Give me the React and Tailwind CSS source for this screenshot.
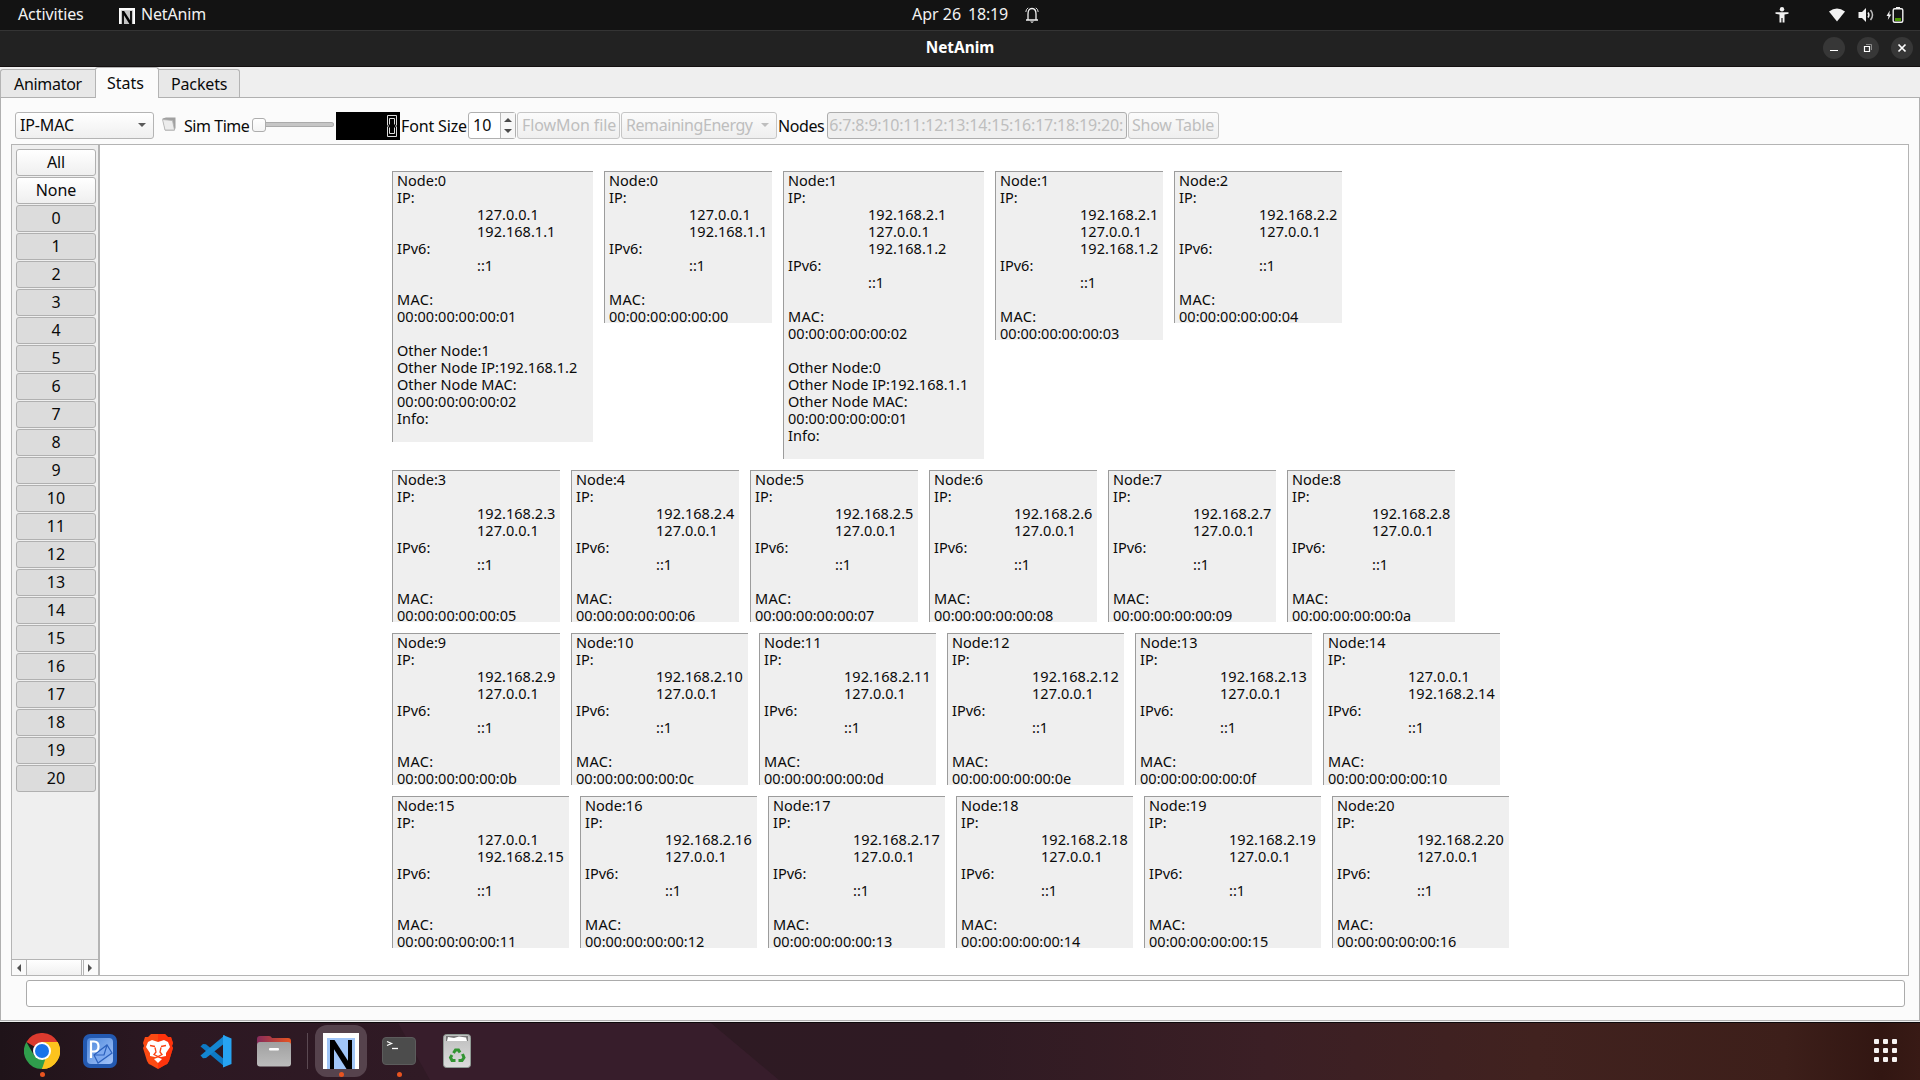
import React from "react";

const v6 = (ips, mac) => ["IP:", ...ips.map((i) => "\t" + i), "IPv6:", "\t::1", "", "MAC:", mac];
const addr = (n) => "00:00:00:00:00:" + n;

const basic = (node, ips, mac) => ({ wide: false, lines: ["Node:" + node, ...v6(ips, addr(mac))] });
const linked = (node, ips, mac, other, otherIp, otherMac) => ({
  wide: true,
  lines: [
    "Node:" + node,
    ...v6(ips, addr(mac)),
    "",
    "Other Node:" + other,
    "Other Node IP:" + otherIp,
    "Other Node MAC:",
    addr(otherMac),
    "Info:",
    "",
  ],
});

const LO = "127.0.0.1";
const net = (n) => "192.168.2." + n;

const ROWS = [
  [
    linked(0, [LO, "192.168.1.1"], "01", 1, "192.168.1.2", "02"),
    basic(0, [LO, "192.168.1.1"], "00"),
    linked(1, [net(1), LO, "192.168.1.2"], "02", 0, "192.168.1.1", "01"),
    basic(1, [net(1), LO, "192.168.1.2"], "03"),
    basic(2, [net(2), LO], "04"),
  ],
  [3, 4, 5, 6, 7, 8].map((n) => basic(n, [net(n), LO], ["05", "06", "07", "08", "09", "0a"][n - 3])),
  [
    basic(9, [net(9), LO], "0b"),
    basic(10, [net(10), LO], "0c"),
    basic(11, [net(11), LO], "0d"),
    basic(12, [net(12), LO], "0e"),
    basic(13, [net(13), LO], "0f"),
    basic(14, [LO, net(14)], "10"),
  ],
  [
    basic(15, [LO, net(15)], "11"),
    basic(16, [net(16), LO], "12"),
    basic(17, [net(17), LO], "13"),
    basic(18, [net(18), LO], "14"),
    basic(19, [net(19), LO], "15"),
    basic(20, [net(20), LO], "16"),
  ],
];

function cardWidth(card) {
  if (card.wide) return "w-[201px]";
  return card.lines.some((l) => /\.2\.\d\d$/.test(l)) ? "w-[177px]" : "w-[168px]";
}

function Card({ card }) {
  return (
    <div
      className={
        cardWidth(card) +
        " shrink-0 border-t border-l border-[#9c9c9c] bg-[#efefef] pl-1 text-[14.5px] leading-[17px] whitespace-pre"
      }
      style={{ height: card.lines.length * 17 - 1 }}
    >
      {card.lines.map((l, i) =>
        l.startsWith("\t") ? (
          <div key={i} className="h-[17px] pl-20 tracking-[0.04px]">{l.slice(1)}</div>
        ) : (
          <div key={i} className={l === "MAC:" ? "h-[17px] tracking-[0.3px]" : "h-[17px] tracking-[0.02px]"}>{l}</div>
        )
      )}
    </div>
  );
}

function NIcon({ className, fill }) {
  return (
    <svg viewBox="0 0 36 36" className={className}>
      <rect width="36" height="36" fill="#fff" />
      <rect x="4" y="5" width="28" height="31" fill={fill} />
      <path d="M9 36V7M27 36V7" fill="none" stroke="#000" strokeWidth="4" />
      <path d="M7 7H11.500L27 31V36H23.500L9 13Z" fill="#000" />
    </svg>
  );
}

function TopBar() {
  return (
    <div className="grid h-[30px] shrink-0 grid-cols-[1fr_auto_1fr] bg-[#131313] text-[#f2f2f2]">
      <div className="flex h-7 items-center pl-[18px]">
        <span className="w-[101px] tracking-[-0.1px]">Activities</span>
        <NIcon className="mt-[3px] size-4" fill="#c4c4c4" />
        <span className="ml-[6px] tracking-[-0.17px]">NetAnim</span>
      </div>
      <div className="flex h-7 w-[98px] items-center">
        <span className="w-[57px] shrink-0 pl-px">Apr 26</span>
        <span className="w-[57px] shrink-0 tracking-[-0.2px]">18:19</span>
        <svg viewBox="0 0 14 16" className="mt-0.5 h-4 w-3.5 shrink-0" fill="none" stroke="#f2f2f2">
          <path d="M3 12.500V7Q3 1.500 7 1.500T11 7V12.500M1 13H13" strokeWidth="1.300" />
          <path d="M.8 5Q1 2 3.200 .8M13.200 5Q13 2 10.800 .8" strokeWidth=".9" />
          <path d="M5 14.500H9L7 16Z" fill="#f2f2f2" stroke="none" />
        </svg>
      </div>
      <div className="flex h-[29px] items-center justify-end pr-4">
        <svg viewBox="0 0 14 16" className="h-4 w-3.5" fill="#f2f2f2">
          <circle cx="7" cy="2.200" r="2.200" />
          <path d="M.5 5.300H13.500V6.800L9.500 7.500V15.500H7.600V11H6.400V15.500H4.500V7.500L.5 6.800Z" />
        </svg>
        <svg viewBox="0 0 16 14" className="ml-10 h-3.5 w-4" fill="#f2f2f2">
          <path d="M8 13.500L0 3.500Q8 -2.500 16 3.500Z" />
        </svg>
        <svg viewBox="0 0 16 16" className="ml-[13px] size-4" fill="#f2f2f2">
          <path d="M.5 5H4L8 1V15L4 11H.5Z" />
          <path d="M10 5.500Q11.800 8 10 10.500" fill="none" stroke="#f2f2f2" strokeWidth="1.500" />
          <path d="M12.500 3Q16.500 8 12.500 13" fill="none" stroke="#bdbdbd" strokeWidth="1.500" />
        </svg>
        <svg viewBox="0 0 18 16" className="ml-[12px] h-4 w-[18px]">
          <path d="M3.800 3.500L.5 9H2.500L1.800 13L5.300 7.500H3.300Z" fill="#f2f2f2" />
          <rect x="10" y="0" width="4" height="2" fill="#f2f2f2" />
          <rect x="7.200" y="1.700" width="9.600" height="13.600" rx="1.500" fill="none" stroke="#f2f2f2" strokeWidth="1.400" />
          <rect x="9" y="11" width="6" height="3" fill="#4e9a06" />
        </svg>
      </div>
    </div>
  );
}

function TitleButton({ children }) {
  return (
    <span className="flex size-[22px] items-center justify-center rounded-full bg-[#373737]">
      <svg viewBox="0 0 22 22" className="size-[22px]" fill="none" stroke="#fff">{children}</svg>
    </span>
  );
}

function TitleBar() {
  return (
    <div className="grid h-[37px] shrink-0 grid-cols-[1fr_auto_1fr] items-center border-t border-b border-t-[#343434] border-b-[#141010] bg-[#222222] pb-px">
      <span />
      <span className="text-[15.4px] font-bold text-white">NetAnim</span>
      <div className="flex justify-end gap-3 pr-[7px]">
        <TitleButton><path d="M7 13.500H15" /></TitleButton>
        <TitleButton>
          <path d="M7.500 9.500H12.500V14.500H7.500Z" strokeWidth="1.200" />
          <path d="M9 7.500H14.500V13" stroke="#8a8a8a" />
        </TitleButton>
        <TitleButton><path d="M7.500 7.500L14.500 14.500M14.500 7.500L7.500 14.500" strokeWidth="1.700" /></TitleButton>
      </div>
    </div>
  );
}

function Tabs() {
  return (
    <div className="flex h-[30px] shrink-0 items-end bg-[#efefef]">
      <div className="flex h-7 w-[95px] items-center rounded-tl-[3px] border-t border-l border-[#b4b4b4] bg-[#e8e8e8] pl-[13px] tracking-[-0.3px]">
        Animator
      </div>
      <div className="relative z-10 -mb-px flex h-[31px] w-[64px] items-center rounded-t-[3px] border-x border-t border-[#b4b4b4] bg-[#fbfbfb] pb-px pl-[11px]">
        Stats
      </div>
      <div className="flex h-7 w-[81px] items-center rounded-tr-[3px] border-t border-r border-[#b4b4b4] bg-[#e8e8e8] pl-3 tracking-[-0.15px]">
        Packets
      </div>
    </div>
  );
}

const Down = ({ fill }) => (
  <svg viewBox="0 0 8 4" className="h-1 w-2 shrink-0"><path d="M0 0H8L4 4Z" fill={fill} /></svg>
);

function Toolbar() {
  return (
    <div className="flex h-[46px] shrink-0 items-center pt-[9px] pl-3.5 whitespace-nowrap">
      <div className="flex h-[27px] w-[139px] items-center justify-between rounded-[3px] border border-[#b4b4b4] bg-linear-to-b from-white to-[#efefef] pr-[7px] pb-px pl-1 tracking-[-0.15px]">
        IP-MAC
        <Down fill="#5a5a5a" />
      </div>
      <svg viewBox="0 0 14 14" className="mr-2 mb-1 ml-2 size-3.5">
        <path d="M.5 1.500L4 .5H13.500V11L12.500 13.500H3Z" fill="#a0a0a0" />
        <path d="M.5 2.500L10.500 3.500L12.500 13H3Z" fill="#ececec" stroke="#b0b0b0" strokeWidth=".8" />
      </svg>
      <span className="w-[68px] tracking-[-0.45px]">Sim Time</span>
      <div className="-mt-[2px] flex w-[83px] items-center">
        <span className="size-3.5 shrink-0 rounded-[3px] border border-[#adadad] bg-linear-to-b from-white to-[#f4f4f4]" />
        <span className="h-[5px] w-[68px] rounded-r-sm border border-l-0 border-[#ababab] bg-[#c6c6c6]" />
      </div>
      <div className="ml-px flex h-7 w-16 items-center justify-end bg-black pr-[3px]">
        <svg viewBox="0 0 10 22" className="h-[22px] w-2.5" fill="none" stroke="#dcdcdc">
          <path d="M.5 .5H9.500V10L8.500 11L9.500 12V21.500H.5V12L1.500 11L.5 10Z" />
          <path d="M2.500 9.500V3.500H7.500V9.500M2.500 12.500V18.500H7.500V12.500" />
        </svg>
      </div>
      <span className="ml-px w-[67px] tracking-[-0.15px]">Font Size</span>
      <div className="flex h-[27px] w-12 rounded-[3px] border border-[#b0b0b0] bg-white">
        <span className="w-[31px] pl-1 leading-[24px]">10</span>
        <span className="flex flex-1 flex-col items-center justify-center gap-[7px] border-l border-[#b8b8b8] bg-[#f7f7f7]">
          <svg viewBox="0 0 8 4" className="h-1 w-2"><path d="M0 4H8L4 0Z" fill="#4a4a4a" /></svg>
          <Down fill="#4a4a4a" />
        </span>
      </div>
      <div className="ml-px flex h-[27px] w-[103px] items-center rounded-[3px] border border-[#c6c6c6] bg-linear-to-b from-[#fbfbfb] to-[#efefef] pb-px pl-1 tracking-[-0.1px] text-[#bebebe]">
        FlowMon file
      </div>
      <div className="ml-px flex h-[27px] w-[156px] items-center justify-between rounded-[3px] border border-[#c6c6c6] bg-linear-to-b from-[#fbfbfb] to-[#efefef] pr-[7px] pb-px pl-1 tracking-[-0.43px] text-[#bebebe]">
        RemainingEnergy
        <Down fill="#bebebe" />
      </div>
      <span className="ml-px w-[49px] tracking-[-0.4px]">Nodes</span>
      <div className="flex h-[27px] w-[300px] items-center justify-end rounded-[3px] border border-[#adadad] bg-[#efefef] pr-[3px] pb-px tracking-[-0.21px] text-[#bebebe]">
        6:7:8:9:10:11:12:13:14:15:16:17:18:19:20:
      </div>
      <div className="ml-px flex h-[27px] w-[91px] items-center rounded-[3px] border border-[#c6c6c6] bg-linear-to-b from-[#fbfbfb] to-[#efefef] pb-px pl-[3px] tracking-[-0.24px] text-[#bebebe]">
        Show Table
      </div>
    </div>
  );
}

function NodeList() {
  return (
    <div className="flex w-[88px] shrink-0 flex-col border-r-2 border-[#b4b4b4] bg-[#efefef]">
      <div className="flex flex-1 flex-col gap-px pt-1 pl-1">
        {["All", "None"].map((t) => (
          <div key={t} className="h-[27px] w-20 rounded-[3px] border border-[#b0b0b0] bg-linear-to-b from-white to-[#efefef] text-center leading-[24px] tracking-[-0.1px]">
            {t}
          </div>
        ))}
        {Array.from({ length: 21 }, (_, n) => (
          <div key={n} className="h-[27px] w-20 rounded-[3px] border border-[#b0b0b0] bg-[#dcdcdc] text-center leading-[24px]">
            {n}
          </div>
        ))}
      </div>
      <div className="flex h-4 border-t border-[#b4b4b4] bg-[#fafafa]">
        <span className="flex w-3.5 items-center justify-center">
          <svg viewBox="0 0 4 8" className="h-2 w-1"><path d="M4 0V8L0 4Z" fill="#505050" /></svg>
        </span>
        <span className="w-14 border-x border-[#b4b4b4] bg-linear-to-b from-white to-[#f0f0f0]" />
        <span className="ml-px flex flex-1 items-center justify-center border-l border-[#b4b4b4] pr-0.5">
          <svg viewBox="0 0 4 8" className="h-2 w-1"><path d="M0 0V8L4 4Z" fill="#505050" /></svg>
        </span>
      </div>
    </div>
  );
}

function Dock() {
  return (
    <div className="relative isolate flex h-[58px] shrink-0 items-center border-t border-[#0d090b] bg-[linear-gradient(90deg,#1f1319_0%,#2c1822_9%,#301a25_22%,#2e1a23_38%,#2f1a23_50%,#3b1f25_66%,#41221f_80%,#3d1f1a_93%,#321612_98%,#381a15_100%)] pb-0.5 pl-6">
      <div className="absolute inset-0 -z-10 bg-[#371d2b] [clip-path:polygon(398px_0,711px_0,779px_100%,430px_100%)]" />
      <div className="relative w-[58px]">
        <svg viewBox="0 0 36 36" className="size-9">
          <path d="M18 18L2.400 9A18 18 0 0 1 33.600 9Z" fill="#db3a2e" />
          <path d="M18 18V9H33.600A18 18 0 0 1 18 36Z" fill="#fcc31e" />
          <path d="M2.400 9L10.200 22.500L18 27L22 24L18 36A18 18 0 0 1 2.400 9Z" fill="#2f9e4c" />
          <path d="M25.800 22.500L18 36A18 18 0 0 0 33.600 9H18Z" fill="#fcc31e" />
          <circle cx="18" cy="18" r="9" fill="#fff" />
          <circle cx="18" cy="18" r="7" fill="#1a73e8" />
        </svg>
        <span className="absolute -bottom-[8px] left-[16px] size-[5px] rounded-full bg-[#e95420]" />
      </div>
      <svg viewBox="0 0 36 36" className="mr-[22px] size-9">
        <defs>
          <linearGradient id="pb" x1="0" y1="0" x2="1" y2="1"><stop stopColor="#4d87db" /><stop offset="1" stopColor="#a4c5fa" /></linearGradient>
        </defs>
        <rect x="1" y="1" width="34" height="34" rx="7" fill="#2359b0" />
        <rect x="5" y="5" width="26" height="26" rx="4" fill="url(#pb)" />
        <path d="M12 22L25 12L30 20L16 30Z" fill="#7eaaf0" stroke="#2c61bd" strokeWidth="1.200" />
        <path d="M12 22L22 22L25 12" fill="none" stroke="#2c61bd" strokeWidth="1.200" />
        <path d="M9 25V8.500H12Q16.500 8.500 16.500 13.500T12 18.500H9" fill="none" stroke="#fff" strokeWidth="2.200" />
      </svg>
      <svg viewBox="0 0 36 36" className="mr-[22px] size-9">
        <path d="M11 1H25L28 4L31 4L33 10L32 13L33 15L29 28Q28 31 25 32L18 36L11 32Q8 31 7 28L3 15L4 13L3 10L5 4L8 4Z" fill="#fb4a13" />
        <path d="M18 1H25L28 4L31 4L33 10L32 13L33 15L29 28Q28 31 25 32L18 36Z" fill="#ff2a0a" opacity=".7" />
        <path d="M8 9L12 7L18 9L24 7L28 9L30 14L26 20L26 23L21 24L18 23L15 24L10 23L10 20L6 14Z" fill="#fff" />
        <path d="M14 26L18 24.500L22 26L18 30Z" fill="#fff" />
        <path d="M10 12.500L15 13.500M26 12.500L21 13.500M15 14.500L16 19L14 21.500L18 23.500L22 21.500L20 19L21 14.500" fill="none" stroke="#fb4415" strokeWidth="1.300" />
      </svg>
      <svg viewBox="0 0 36 36" className="mr-[22px] size-9">
        <path d="M2.500 13.500L5 11L8 11.200L27 27V34L2.500 13.500Z" fill="#0d79c4" />
        <path d="M2.500 22.500L5 25.300L8 25L27 10V2L2.500 22.500Z" fill="#1486d1" />
        <path d="M25 2L33.500 5.500V31L25 34.500Z" fill="#27a4f2" />
      </svg>
      <svg viewBox="0 0 36 36" className="size-9">
        <defs>
          <linearGradient id="fo"><stop stopColor="#852b5c" /><stop offset="1" stopColor="#e95420" /></linearGradient>
          <linearGradient id="ff" x2="0" y2="1"><stop stopColor="#a0a0a0" /><stop offset="1" stopColor="#bcbcbc" /></linearGradient>
        </defs>
        <path d="M1 6Q1 3 4 3H13Q15 3 16 5H32Q35 5 35 8V20H1Z" fill="url(#fo)" />
        <rect x="1" y="9" width="34" height="24.500" rx="3" fill="url(#ff)" />
        <rect x="13" y="15" width="10" height="2.500" rx="1" fill="#fff" />
      </svg>
      <span className="ml-[15px] h-9 w-px bg-[#5b4952]" />
      <div className="relative ml-[7px] flex h-[52px] w-[52px] items-center justify-center rounded-xl bg-[#56434d]">
        <NIcon className="size-9" fill="#a1c6f8" />
        <span className="absolute bottom-0 left-[23.500px] size-[5px] rounded-full bg-[#e95420]" />
      </div>
      <div className="relative ml-[14px] w-[36px]">
        <svg viewBox="0 0 36 36" className="size-9">
          <rect x="1.500" y="4.500" width="33" height="27" rx="3.500" fill="#4c4c4c" stroke="#5c5c5c" />
          <path d="M6 8.500L10.500 10.500L6 12.500" fill="none" stroke="#fff" strokeWidth="1.300" />
          <path d="M11 15.500H17" stroke="#fff" strokeWidth="1.300" />
        </svg>
        <span className="absolute -bottom-[8px] left-[16px] size-[5px] rounded-full bg-[#e95420]" />
      </div>
      <svg viewBox="0 0 36 36" className="ml-[22px] size-9">
        <defs><linearGradient id="tr" x2="0" y2="1"><stop stopColor="#bdbdbd" /><stop offset="1" stopColor="#dcdcdc" /></linearGradient></defs>
        <rect x="4.500" y="1.500" width="27" height="33" rx="3" fill="url(#tr)" stroke="#8f9b94" />
        <path d="M7 3H29V8H7Z" fill="#777" />
        <path d="M8 8L9 4L15 5L20 3.500L27 4.500L28 8Z" fill="#fff" />
        <g fill="none" stroke="#329432" strokeWidth="3">
          <path d="M14.500 20L16.500 17H19.500L21 19.500" />
          <path d="M23.500 21L25 24.500L23 27.500H19.500" />
          <path d="M16.500 27.500H13L11.500 24.500L13 22" />
        </g>
      </svg>
      <div className="ml-auto grid grid-cols-3 gap-1 pr-[23px]">
        {Array.from({ length: 9 }, (_, i) => (
          <span key={i} className="size-[5px] rounded-[1px] bg-[#f7f3f2]" />
        ))}
      </div>
    </div>
  );
}

export default function App() {
  return (
    <div className="flex h-[1080px] w-[1920px] flex-col overflow-hidden bg-[#efefef] font-['Noto_Sans','Open_Sans',sans-serif] text-[16px] text-[#0a0a0a]">
      <TopBar />
      <TitleBar />
      <Tabs />
      <div className="flex h-[924px] shrink-0 flex-col border border-[#b0b0b0] bg-[#fbfbfb]">
        <Toolbar />
        <div className="mr-2.5 ml-2.5 flex h-[832px] shrink-0 border border-[#b4b4b4] bg-white">
          <NodeList />
          <div className="flex flex-col gap-[11px] pt-[26px] pl-[292px]">
            {ROWS.map((row, i) => (
              <div key={i} className="flex items-start gap-[11px]">
                {row.map((card, j) => (
                  <Card key={j} card={card} />
                ))}
              </div>
            ))}
          </div>
        </div>
        <div className="mt-1 mr-3.5 ml-[25px] h-[27px] shrink-0 rounded-[3px] border border-[#ababab] bg-white" />
      </div>
      <div className="h-px shrink-0 bg-[#efefef]" />
      <Dock />
    </div>
  );
}
